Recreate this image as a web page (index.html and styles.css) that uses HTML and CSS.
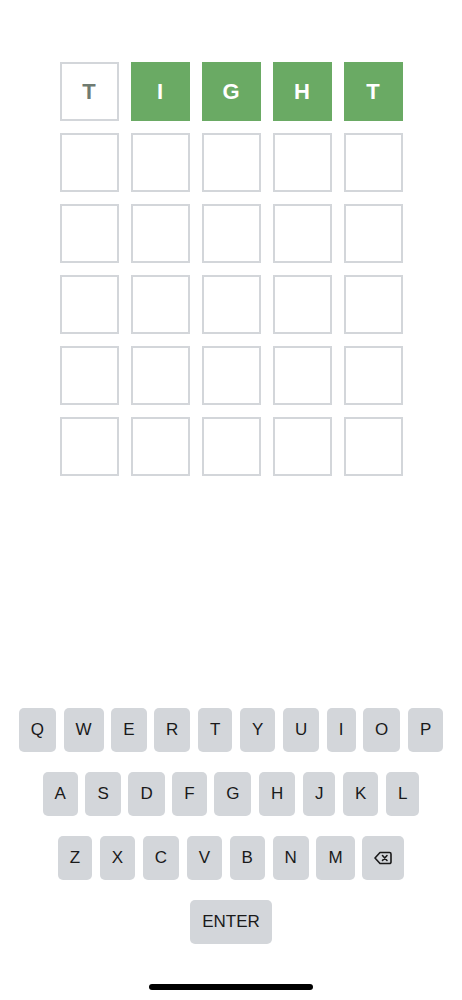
FILE: index.html
```html
<!DOCTYPE html>
<html lang="en">
<head>
    <meta charset="UTF-8">
    <meta name="viewport" content="width=device-width, initial-scale=1.0">
    <title>Wordle</title>
    <link rel="stylesheet" href="styles.css">
</head>
<body>
    <div class="app">
        <!-- Tabuleiro: 6 tentativas de 5 letras -->
        <div class="board">
            <div class="tile tile-reveal">T</div>
            <div class="tile tile-correct">I</div>
            <div class="tile tile-correct">G</div>
            <div class="tile tile-correct">H</div>
            <div class="tile tile-correct">T</div>

            <div class="tile"></div><div class="tile"></div><div class="tile"></div><div class="tile"></div><div class="tile"></div>
            <div class="tile"></div><div class="tile"></div><div class="tile"></div><div class="tile"></div><div class="tile"></div>
            <div class="tile"></div><div class="tile"></div><div class="tile"></div><div class="tile"></div><div class="tile"></div>
            <div class="tile"></div><div class="tile"></div><div class="tile"></div><div class="tile"></div><div class="tile"></div>
            <div class="tile"></div><div class="tile"></div><div class="tile"></div><div class="tile"></div><div class="tile"></div>
        </div>

        <!-- Teclado -->
        <div class="keyboard">
            <div class="key-row">
                <button class="key">Q</button>
                <button class="key">W</button>
                <button class="key">E</button>
                <button class="key">R</button>
                <button class="key">T</button>
                <button class="key">Y</button>
                <button class="key">U</button>
                <button class="key">I</button>
                <button class="key">O</button>
                <button class="key">P</button>
            </div>
            <div class="key-row">
                <button class="key">A</button>
                <button class="key">S</button>
                <button class="key">D</button>
                <button class="key">F</button>
                <button class="key">G</button>
                <button class="key">H</button>
                <button class="key">J</button>
                <button class="key">K</button>
                <button class="key">L</button>
            </div>
            <div class="key-row">
                <button class="key">Z</button>
                <button class="key">X</button>
                <button class="key">C</button>
                <button class="key">V</button>
                <button class="key">B</button>
                <button class="key">N</button>
                <button class="key">M</button>
                <button class="key key-back" aria-label="Backspace">
                    <svg width="18" height="14" viewBox="0 0 18 14" fill="none" stroke="#1a1a1a" stroke-width="1.6" stroke-linejoin="round" stroke-linecap="round">
                        <path d="M6 1.5 H15.5 a1.5 1.5 0 0 1 1.5 1.5 V11 a1.5 1.5 0 0 1 -1.5 1.5 H6 L1 7 Z"/>
                        <path d="M8.5 4.5 L13 9.5 M13 4.5 L8.5 9.5"/>
                    </svg>
                </button>
            </div>
            <div class="key-row">
                <button class="key">ENTER</button>
            </div>
        </div>

        <!-- Indicador inicial do iPhone -->
        <div class="home-indicator"></div>
    </div>
</body>
</html>
```

FILE: styles.css
```css
/* Corpo da página */
body {
    margin: 0;
    background-color: #fff;
    font-family: "Liberation Sans", Arial, sans-serif;
    color: #1a1a1a;
}

.app {
    height: 1000px;
    display: flex;
    flex-direction: column;
    align-items: center;
    padding-bottom: 10px;
    box-sizing: border-box;
}

/* Tabuleiro */
.board {
    margin-top: 62px;
    display: grid;
    grid-template-columns: repeat(5, 59px);
    grid-auto-rows: 59px;
    gap: 12px;
}

.tile {
    border: 2px solid #d3d6da;
    box-sizing: border-box;
    display: flex;
    align-items: center;
    justify-content: center;
    font-size: 22px;
    font-weight: bold;
    color: #fff;
}

.tile-reveal {
    color: #6f7b71;
}

.tile-correct {
    background-color: #6aaa64;
    border-color: #6aaa64;
}

/* Teclado */
.keyboard {
    margin-top: auto;
    display: flex;
    flex-direction: column;
    gap: 20px;
}

.key-row {
    display: flex;
    justify-content: center;
    gap: 7.6px;
}

.key {
    height: 44px;
    padding: 0 12px;
    border: none;
    border-radius: 5px;
    background-color: #d3d6da;
    font-family: inherit;
    font-size: 17px;
    color: #1a1a1a;
    display: flex;
    align-items: center;
    justify-content: center;
}

.key-back {
    width: 42px;
    padding: 0;
}

.home-indicator {
    margin-top: 40px;
    width: 164px;
    height: 6px;
    border-radius: 3px;
    background-color: #000;
}
```
